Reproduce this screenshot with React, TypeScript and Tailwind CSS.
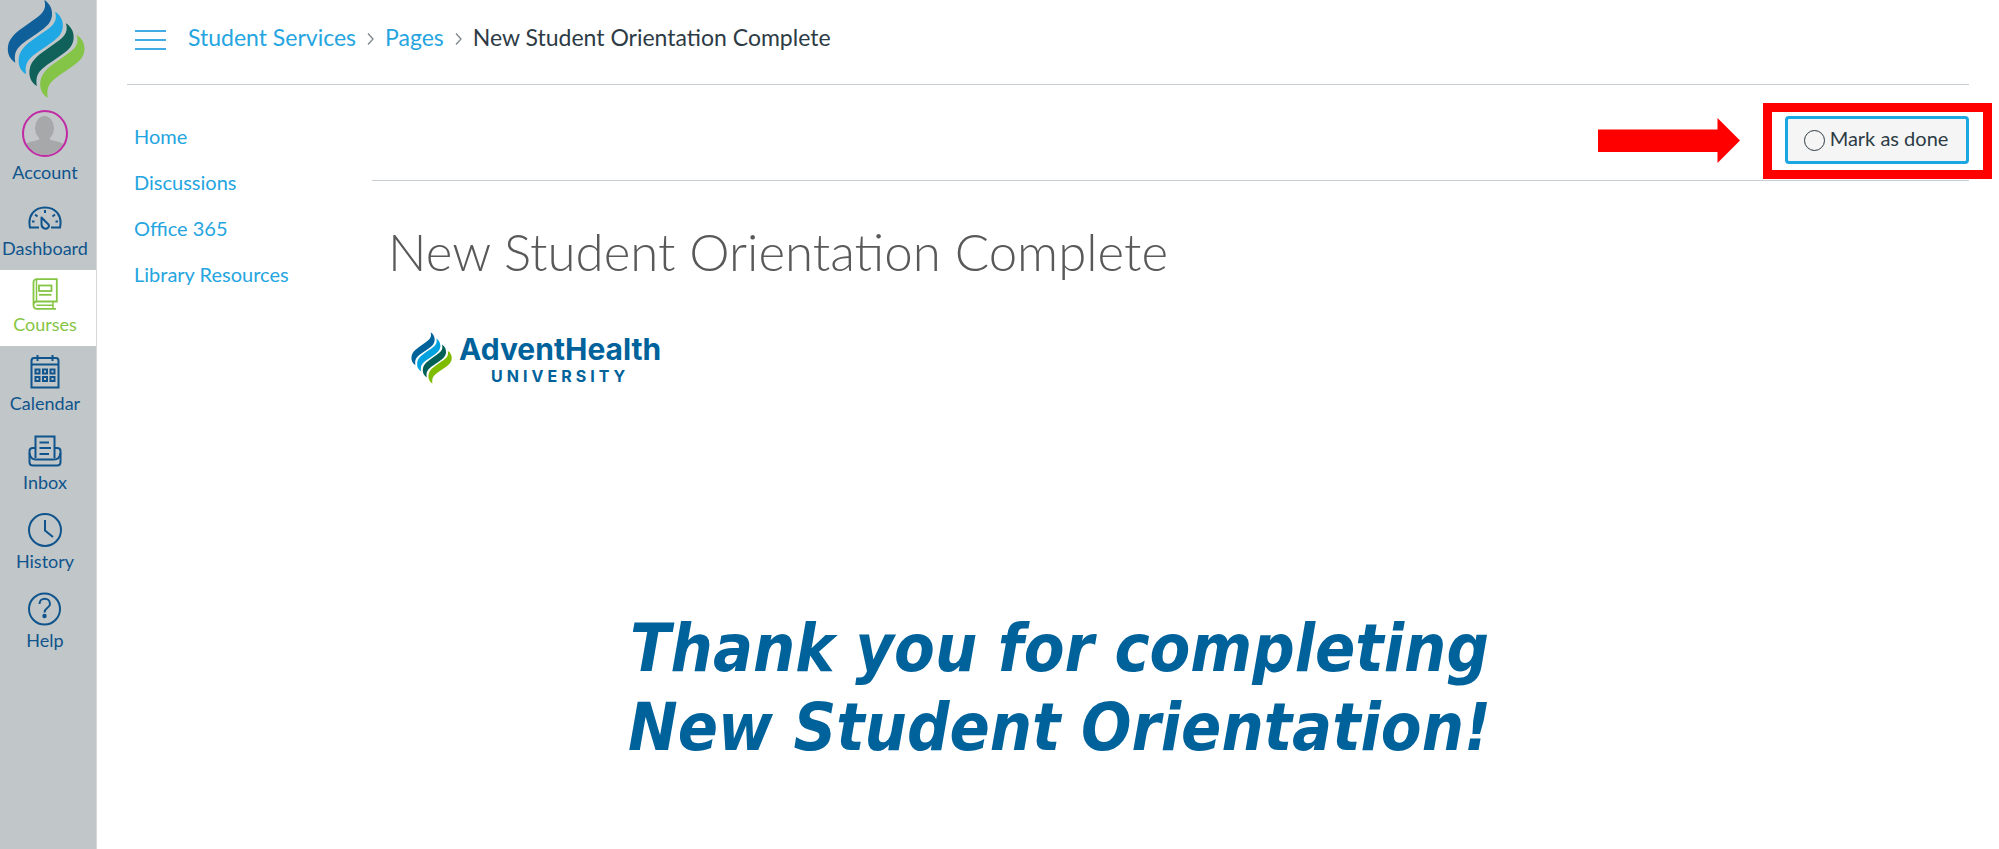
import React from 'react';

type BladeColors = [string, string, string, string];

const navBlades: BladeColors = ['#0f5f9a', '#1fa8e3', '#0f6159', '#84c446'];
const brandBlades: BladeColors = ['#00629b', '#00a3e0', '#006058', '#7fbc00'];

const Flame: React.FC<{ colors: BladeColors; className: string }> = ({ colors, className }) => (
  <svg viewBox="20 0 234 294" className={className} aria-hidden="true">
    {colors.map((color, i) => (
      <path
        key={color}
        transform={`translate(${i * 32.4} ${i * 35})`}
        fill={color}
        d="M132 0 C148 10 157 27 155 46 C153 74 128 88 98 109 C56 137 39 149 45 188 C28 178 20 160 23 139 C27 109 54 92 88 68 C124 44 141 31 132 0Z"
      />
    ))}
  </svg>
);

const AvatarIcon = () => (
  <svg viewBox="0 0 46 47" className="w-[46px] h-[47px]" aria-hidden="true">
    <defs>
      <clipPath id="avatar">
        <ellipse cx="23" cy="23.5" rx="21" ry="21.5" />
      </clipPath>
    </defs>
    <g clipPath="url(#avatar)" fill="#a6a8a9">
      <rect width="46" height="47" fill="#c3c7c9" />
      <ellipse cx="22.5" cy="18" rx="9.5" ry="12" />
      <path d="M18 26h9c0 4 2 4 6 5c6 1 9 3 10 6v10H2V37c1-3 4-5 10-6c4-1 6-1 6-5z" />
    </g>
    <ellipse cx="23" cy="23.5" rx="22" ry="22.5" fill="none" stroke="#c02aa4" strokeWidth="2" />
  </svg>
);

const DashboardIcon = () => (
  <svg viewBox="0 0 34 24" className="w-[34px] h-6" fill="none" stroke="currentColor" strokeWidth="2" aria-hidden="true">
    <path d="M11 21.500H2C-.5 10 6 1.500 17 1.500S34.500 10 32 21.500H23" />
    <path d="M13.500 11.500L20.500 18.500C22 21 19 23.500 16.500 22.500C14 22 13.500 20 13.500 18Z" strokeLinejoin="round" />
    <path d="M17 4v3M7 8.500l2.500 2M27 8.500l-2.500 2M4 15.500h2.500M30 15.500h-2.500" />
  </svg>
);

const CoursesIcon = () => (
  <svg viewBox="0 0 26 32" className="w-[26px] h-8" fill="none" stroke="currentColor" strokeWidth="1.800" aria-hidden="true">
    <path d="M1.500 27V4.500C1.500 2 3 1.200 5 1.200H24.800V23.500H5C2.800 23.500 1.500 25 1.500 27C1.500 29.500 3 30.800 5 30.800H24" />
    <path d="M4.500 1.500V23M21 23.500V30M4.500 27.200H21" strokeWidth="1.500" />
    <rect x="7" y="7.500" width="12.500" height="5.500" />
    <path d="M7 16.800H19.500" />
  </svg>
);

const CalendarIcon = () => (
  <svg viewBox="0 0 30 34" className="w-[30px] h-[34px]" fill="none" stroke="currentColor" strokeWidth="2" aria-hidden="true">
    <path d="M1.500 32.500V6C1.500 4 2.500 3 4 3H26C27.500 3 28.500 4 28.500 6V32.500ZM1.500 9.500H28.500M7.500 0V6M22.500 0V6" />
    {[14.5, 22].map((y) =>
      [5.5, 13, 20.5].map((x) => <rect key={`${x}-${y}`} x={x} y={y} width="4" height="4" />)
    )}
  </svg>
);

const InboxIcon = () => (
  <svg viewBox="0 0 34 32" className="w-[34px] h-8" fill="none" stroke="currentColor" strokeWidth="2" aria-hidden="true">
    <path d="M7.500 23V1.500H26.500V23" />
    <path d="M7.500 13H5C2.500 13 1.500 14 1.500 16V27C1.500 29.500 2.500 30.500 5 30.500H29C31.500 30.500 32.500 29.500 32.500 27V16C32.500 14 31.500 13 29 13H26.500" />
    <path d="M1.500 18C2 22 4 24.500 8 24.500H26C30 24.500 32 22 32.500 18M11.500 7.500H21M11.500 13H23M11.500 19H21" />
  </svg>
);

const HistoryIcon = () => (
  <svg viewBox="0 0 34 34" className="w-[34px] h-[34px]" fill="none" stroke="currentColor" strokeWidth="2" aria-hidden="true">
    <circle cx="17" cy="17" r="16" />
    <path d="M17 7V17.500L25 24" />
  </svg>
);

const HelpIcon = () => (
  <svg viewBox="0 0 34 34" className="w-[34px] h-[34px]" fill="none" stroke="currentColor" strokeWidth="2" aria-hidden="true">
    <circle cx="16.500" cy="17" r="15.500" />
    <path d="M11.500 12C11.500 5 22 5 22 12C22 16 16.500 15.500 16.500 20.500" />
    <circle cx="16.500" cy="24" r="1.200" fill="currentColor" />
  </svg>
);

const globalNav = [
  { label: 'Account', icon: <AvatarIcon />, box: 'h-[88px]' },
  { label: 'Dashboard', icon: <DashboardIcon />, box: 'h-[76px] pt-1.5' },
  { label: 'Courses', icon: <CoursesIcon />, box: 'h-[76px] pt-1.5', active: true },
  { label: 'Calendar', icon: <CalendarIcon />, box: 'h-[79px] pt-1.5' },
  { label: 'Inbox', icon: <InboxIcon />, box: 'h-[79px] pt-1.5' },
  { label: 'History', icon: <HistoryIcon />, box: 'h-[79px] pt-1.5' },
  { label: 'Help', icon: <HelpIcon />, box: 'h-[79px] pt-1.5' },
];

const courseNav = ['Home', 'Discussions', 'Office 365', 'Library Resources'];

const Separator = () => (
  <svg viewBox="0 0 8 14" className="w-[9px] h-3.5 mt-1" fill="none" stroke="#7d858b" strokeWidth="1.300" aria-hidden="true">
    <path d="M1.500 1.500L6.500 7L1.500 12.500" />
  </svg>
);

const App: React.FC = () => {
  return (
    <div className="flex min-h-screen bg-white font-['Lato',sans-serif] text-[#2d3b45]">
      {/* Global navigation */}
      <nav aria-label="Global" className="w-[97px] shrink-0 bg-[#c1c6c8] border-r border-[#d5d8da]">
        <a href="#" aria-label="AdventHealth University" className="flex h-[106px] pl-[7px]">
          <Flame colors={navBlades} className="w-[78px] h-[98px]" />
        </a>
        <ul>
          {globalNav.map((item) => (
            <li key={item.label}>
              <a
                href="#"
                className={`flex flex-col items-center justify-end pr-1.5 pb-2.5 text-lg leading-6 ${item.box} ${
                  item.active ? 'bg-white text-[#86c544]' : 'text-[#0f548c]'
                }`}
              >
                <span className="flex flex-1 items-center">{item.icon}</span>
                {item.label}
              </a>
            </li>
          ))}
        </ul>
      </nav>

      <div className="flex-1 min-w-0 px-[30px]">
        {/* Breadcrumbs */}
        <header className="flex items-center h-[85px] pb-2.5 pl-2 border-b border-[#c7cdd1]">
          <button type="button" aria-label="Course navigation" className="flex flex-col gap-[7px] w-[31px] mt-1.5">
            <span className="h-0.5 w-full bg-[#41abe3]" />
            <span className="h-0.5 w-full bg-[#41abe3]" />
            <span className="h-0.5 w-full bg-[#41abe3]" />
          </button>
          <nav aria-label="Breadcrumb" className="flex items-center gap-2.5 ml-[22px] text-[23px] leading-8">
            <a href="#" className="text-[#25a5df]">Student Services</a>
            <Separator />
            <a href="#" className="text-[#25a5df]">Pages</a>
            <Separator />
            <span>New Student Orientation Complete</span>
          </nav>
        </header>

        <div className="flex">
          {/* Course navigation */}
          <nav aria-label="Course" className="w-[245px] shrink-0 pt-7 pl-[7px]">
            <ul>
              {courseNav.map((label) => (
                <li key={label}>
                  <a href="#" className="block text-xl leading-[46px] text-[#25a5df]">{label}</a>
                </li>
              ))}
            </ul>
          </nav>

          <main className="flex-1 min-w-0">
            <div className="flex justify-end h-24 pt-[31px] border-b border-[#c7cdd1]">
              <div className="relative h-12">
                <button
                  type="button"
                  className="flex items-center justify-center gap-[5px] w-[184px] h-12 rounded-sm border-3 border-[#1ba8e2] bg-[#f5f5f5] text-xl pb-1 pr-0.5"
                >
                  <span className="size-[21px] mt-1 rounded-full border border-[#2d3b45]" />
                  Mark as done
                </button>
                {/* Callout around the button */}
                <div className="absolute -top-[13px] -left-[22px] w-[229px] h-[76px] border-9 border-[#ff0000] pointer-events-none" />
                <svg viewBox="0 0 142 46" className="absolute top-0.5 right-[229px] w-[142px] h-[46px]" aria-hidden="true">
                  <path d="M0 11.500H119.500V0L142 22.500L119.500 45V34H0Z" fill="#ff0000" />
                </svg>
              </div>
            </div>

            <article className="px-4 pt-[41px]">
              <h1 className="text-[51px] leading-[60px] font-light text-[#595959]">New Student Orientation Complete</h1>

              <div className="flex items-start gap-[7px] mt-[50px] pl-[23px] text-[#00629b]">
                <Flame colors={brandBlades} className="w-[41px] h-[52px]" />
                <div className="flex flex-col items-center font-['Inter',sans-serif] font-bold">
                  <span className="text-[30px] leading-[35px]">AdventHealth</span>
                  <span className="text-base leading-[19px] tracking-[4px]">UNIVERSITY</span>
                </div>
              </div>

              <p className="mt-[223px] pr-[222px] text-center text-[66px] leading-[79px] font-bold italic text-[#00629b] font-['DejaVu_Sans_Condensed','DejaVu_Sans',sans-serif]">
                Thank you for completing
                <br />
                New Student Orientation!
              </p>
            </article>
          </main>
        </div>
      </div>
    </div>
  );
};

export default App;
